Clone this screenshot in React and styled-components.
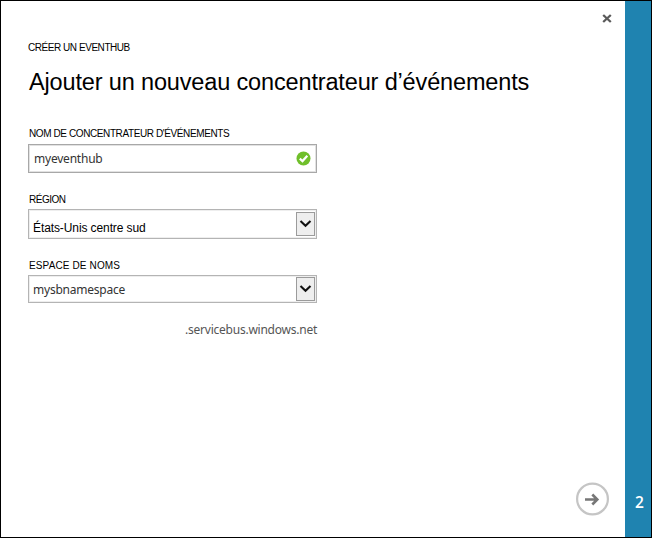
import React from "react";
import styled, { createGlobalStyle } from "styled-components";

const GlobalStyle = createGlobalStyle`
  * { box-sizing: border-box; }
  body { margin: 0; background: #fff; font-family: "Liberation Sans", Arial, sans-serif; color: #000; }
`;

const Dialog = styled.div`
  display: flex;
  width: 652px;
  height: 538px;
  border: 1px solid #000;
  background: #fff;
  overflow: hidden;
`;

const Main = styled.main`
  display: flex;
  flex-direction: column;
  flex: 1;
  padding: 11px 15px 21px 27px;
`;

const StepRail = styled.aside`
  display: flex;
  align-items: flex-end;
  justify-content: center;
  width: 26px;
  padding: 0 0 24px 3px;
  background: #1f83b0;
  color: #fff;
  font: 600 15.5px/22px "Open Sans", sans-serif;
`;

const IconButton = styled.button`
  display: flex;
  align-self: flex-end;
  flex: none;
  padding: 0;
  border: 0;
  background: none;
`;

const CloseButton = styled(IconButton)`
  margin-right: -7px;
  padding: 2px 5px;
`;

const Caption = styled.div`
  height: 14px;
  padding-left: 1px;
  font-size: 10px;
  line-height: 14px;
  white-space: nowrap;
  letter-spacing: ${(p) => p.$spacing || 0}px;
`;

const Eyebrow = styled(Caption)`
  margin-top: 15px;
  padding-left: 0;
`;

const Title = styled.h1`
  height: 30px;
  margin: 12px 0 0 1px;
  font-size: 23.5px;
  font-weight: 400;
  line-height: 30px;
  white-space: nowrap;
  letter-spacing: -0.15px;
`;

const Form = styled.form`
  display: flex;
  flex-direction: column;
  width: 289px;
  margin-top: 30px;
`;

const Field = styled.div`
  display: flex;
  flex-direction: column;
  height: 66px;
`;

const Control = styled.div`
  display: flex;
  align-items: center;
  justify-content: space-between;
  height: ${(p) => p.$height}px;
  margin-top: ${(p) => (p.$select ? 2 : 3)}px;
  padding: 0 ${(p) => (p.$select ? "1px 0 4px" : "5px 0 5px")};
  border: 1px solid ${(p) => (p.$select ? "#b4b4b4" : "#a8a8a8")};
  box-shadow: inset 0 0 0 1px ${(p) => (p.$select ? "#eeeeee" : "#e2e2e2")};
`;

const Value = styled.span`
  color: #333;
  font: 12px/18px "Noto Sans", sans-serif;
  letter-spacing: -0.22px;
  white-space: nowrap;
`;

const RegionValue = styled(Value)`
  padding-top: 7px;
  color: #000;
  font-family: "Liberation Sans", Arial, sans-serif;
  letter-spacing: -0.1px;
`;

const NamespaceValue = styled(Value)`
  padding-top: 2px;
`;

const DropButton = styled.span`
  display: flex;
  align-items: center;
  justify-content: center;
  width: 19px;
  height: 24px;
  border: 1px solid #9b9b9b;
  background: #eee;
`;

const Suffix = styled(Value)`
  align-self: flex-end;
  margin-top: -4px;
  color: #555;
  letter-spacing: -0.24px;
`;

const NextButton = styled(IconButton)`
  margin-top: auto;
`;

const Chevron = () => (
  <DropButton>
    <svg width="13" height="9" viewBox="0 0 13 9" fill="none" stroke="#111" strokeWidth="2.1">
      <path d="M1.5 1 6.5 5.7 11.5 1" />
    </svg>
  </DropButton>
);

export default function App() {
  return (
    <>
      <GlobalStyle />
      <Dialog>
        <Main>
          <CloseButton type="button" aria-label="Fermer">
            <svg width="10" height="10" viewBox="0 0 10 10" stroke="#5b5b5b" strokeWidth="2.3">
              <path d="M1.2 1 8.8 8M8.8 1 1.2 8" />
            </svg>
          </CloseButton>
          <Eyebrow $spacing={-0.45}>CRÉER UN EVENTHUB</Eyebrow>
          <Title>Ajouter un nouveau concentrateur d’événements</Title>
          <Form>
            <Field>
              <Caption $spacing={-0.4}>NOM DE CONCENTRATEUR D'ÉVÉNEMENTS</Caption>
              <Control $height={29}>
                <Value>myeventhub</Value>
                <svg width="15" height="15" viewBox="0 0 15 15" fill="none">
                  <circle cx="7.5" cy="7.5" r="7" fill="#70bf2b" />
                  <path d="M3.8 7.6 6.5 10.1 11.3 4.8" stroke="#fff" strokeWidth="2.2" />
                </svg>
              </Control>
            </Field>
            <Field>
              <Caption $spacing={-0.5}>RÉGION</Caption>
              <Control $select $height={30}>
                <RegionValue>États-Unis centre sud</RegionValue>
                <Chevron />
              </Control>
            </Field>
            <Field>
              <Caption $spacing={0.13}>ESPACE DE NOMS</Caption>
              <Control $select $height={28}>
                <NamespaceValue>mysbnamespace</NamespaceValue>
                <Chevron />
              </Control>
            </Field>
            <Suffix>.servicebus.windows.net</Suffix>
          </Form>
          <NextButton type="button" aria-label="Suivant">
            <svg width="34" height="34" viewBox="0 0 34 34" fill="none">
              <circle cx="16.5" cy="17" r="15.4" stroke="#c5c5c5" strokeWidth="2.2" />
              <path d="M9 17.5H22M16.3 12.5 21.3 17.5 16.3 22.5" stroke="#777" strokeWidth="2.6" />
            </svg>
          </NextButton>
        </Main>
        <StepRail>2</StepRail>
      </Dialog>
    </>
  );
}
